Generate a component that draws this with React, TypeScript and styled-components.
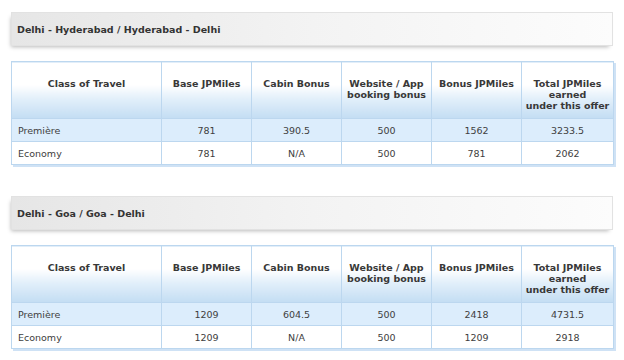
import React from 'react';
import styled, { createGlobalStyle } from 'styled-components';

const GlobalStyle = createGlobalStyle`
  body {
    margin: 0;
    background: #fff;
    font-family: "DejaVu Sans", Verdana, sans-serif;
  }
`;

const Page = styled.div`
  width: 624px;
  height: 360px;
  padding: 12px 11px 0 11px;
  box-sizing: border-box;
  overflow: hidden;
`;

const Section = styled.div`
  margin-bottom: 31px;
`;

const RouteHeader = styled.div`
  height: 34px;
  box-sizing: border-box;
  border: 1px solid #e2e2e2;
  background: linear-gradient(to right, #e6e6e6 0%, #f3f3f3 50%, #fcfcfc 100%);
  box-shadow: -2px 3px 4px -2px rgba(0, 0, 0, 0.28);
  display: flex;
  align-items: center;
  padding-left: 5px;
  margin-bottom: 15px;
`;

const RouteTitle = styled.h3`
  margin: 0;
  font-size: 9.5px;
  font-weight: bold;
  color: #333;
`;

const Table = styled.table`
  width: 602px;
  border-collapse: collapse;
  table-layout: fixed;
  border: 1px solid #b3d1ee;
  box-shadow: 2px 2px 0 #cfe2f5;
  font-size: 9.5px;
  color: #404040;
`;

const HeadCell = styled.th`
  height: 57px;
  box-sizing: border-box;
  vertical-align: top;
  padding: 16px 2px 0 2px;
  line-height: 11px;
  font-weight: bold;
  color: #383838;
  border: 1px solid #bcd7ef;
  background: linear-gradient(to bottom, #ffffff 0%, #ffffff 40%, #e2effa 65%, #c3ddf3 100%);
`;

const Row = styled.tr<{ shaded?: boolean }>`
  background: ${p => (p.shaded ? '#dcedfc' : '#ffffff')};
`;

const Cell = styled.td<{ left?: boolean }>`
  height: 23px;
  box-sizing: border-box;
  padding: 0 6px;
  text-align: ${p => (p.left ? 'left' : 'center')};
  border: 1px solid #bcd7ef;
`;

interface RouteData {
  title: string;
  rows: string[][];
}

const routes: RouteData[] = [
  {
    title: 'Delhi - Hyderabad / Hyderabad - Delhi',
    rows: [
      ['Première', '781', '390.5', '500', '1562', '3233.5'],
      ['Economy', '781', 'N/A', '500', '781', '2062'],
    ],
  },
  {
    title: 'Delhi - Goa / Goa - Delhi',
    rows: [
      ['Première', '1209', '604.5', '500', '2418', '4731.5'],
      ['Economy', '1209', 'N/A', '500', '1209', '2918'],
    ],
  },
];

const widths = [150, 90, 90, 90, 90, 92];

const App: React.FC = () => (
  <>
    <GlobalStyle />
    <Page>
      {routes.map(route => (
        <Section key={route.title}>
          <RouteHeader>
            <RouteTitle>{route.title}</RouteTitle>
          </RouteHeader>
          <Table>
            <colgroup>
              {widths.map((w, i) => (
                <col key={i} style={{ width: w }} />
              ))}
            </colgroup>
            <thead>
              <tr>
                <HeadCell>Class of Travel</HeadCell>
                <HeadCell>Base JPMiles</HeadCell>
                <HeadCell>Cabin Bonus</HeadCell>
                <HeadCell>Website / App<br />booking bonus</HeadCell>
                <HeadCell>Bonus JPMiles</HeadCell>
                <HeadCell>Total JPMiles<br />earned<br />under this offer</HeadCell>
              </tr>
            </thead>
            <tbody>
              {route.rows.map((row, i) => (
                <Row key={row[0]} shaded={i === 0}>
                  {row.map((v, j) => (
                    <Cell key={j} left={j === 0}>{v}</Cell>
                  ))}
                </Row>
              ))}
            </tbody>
          </Table>
        </Section>
      ))}
    </Page>
  </>
);

export default App;
